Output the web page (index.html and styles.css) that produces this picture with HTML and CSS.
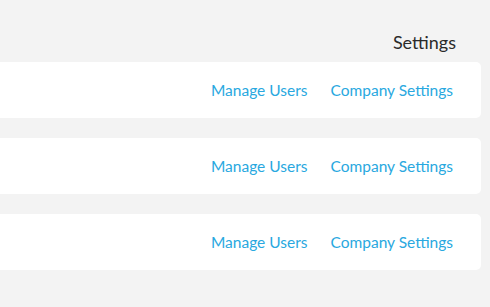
FILE: index.html
```html
<!DOCTYPE html>
<html>
<head>
<meta charset="utf-8">
<link rel="stylesheet" href="styles.css">
</head>
<body>
<div class="page">
  <div class="header">Settings</div>
  <div class="list">
    <div class="card">
      <a class="link">Manage Users</a>
      <a class="link">Company Settings</a>
    </div>
    <div class="card">
      <a class="link">Manage Users</a>
      <a class="link">Company Settings</a>
    </div>
    <div class="card">
      <a class="link">Manage Users</a>
      <a class="link">Company Settings</a>
    </div>
  </div>
</div>
</body>
</html>
```

FILE: styles.css
```css
html, body {
  margin: 0;
  padding: 0;
  background: #f3f3f3;
  font-family: Lato, "Noto Sans", sans-serif;
}
.page {
  margin-left: -20px;
  padding-right: 9px;
}
.header {
  display: flex;
  justify-content: flex-end;
  padding: 31px 25px 9px 0;
  line-height: 22px;
  font-size: 18px;
  color: #2a2a2a;
}
.list {
  display: flex;
  flex-direction: column;
  gap: 20px;
}
.card {
  background: #fff;
  border-radius: 5px;
  height: 56px;
  display: flex;
  align-items: center;
  justify-content: flex-end;
  gap: 23px;
  padding-right: 28px;
}
.link {
  color: #29a8e0;
  font-size: 15.5px;
  cursor: pointer;
}
```
